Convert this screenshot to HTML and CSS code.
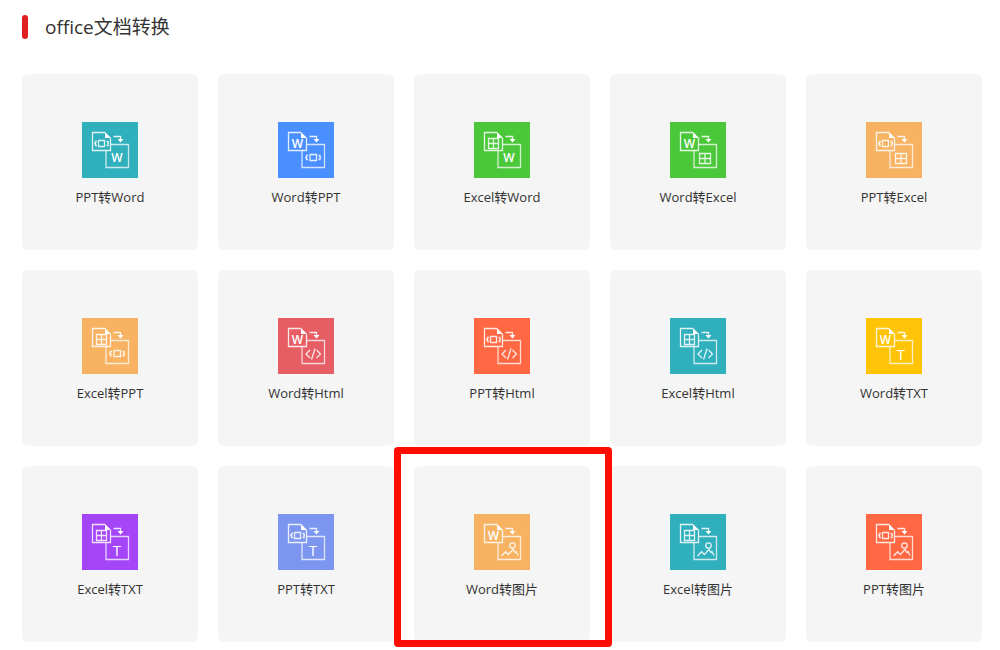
FILE: index.html
```html
<!DOCTYPE html>
<html lang="zh-CN">
<head>
  <meta charset="UTF-8">
  <meta name="viewport" content="width=device-width, initial-scale=1.0">
  <title>office文档转换</title>
  <link rel="stylesheet" href="styles.css">
</head>
<body>
  <!-- shared icon parts -->
  <svg class="sprite" aria-hidden="true">
    <symbol id="base" viewBox="0 0 56 56">
      <path d="M23 10.5H10.5V28.5H28.5V16"/>
      <path d="M29 22.5H46.5V45.5H24V29" stroke-opacity=".75"/>
      <path d="M23 10V16H29Z" fill="#fff" stroke="none"/>
      <path d="M31.5 14.500H38.5V18"/>
      <path d="M35.5 17H41.5L38.500 20.500Z" fill="#fff" stroke="none"/>
    </symbol>
    <symbol id="from-word" viewBox="0 0 56 56"><text class="letter" x="19.5" y="26">W</text></symbol>
    <symbol id="from-ppt" viewBox="0 0 56 56">
      <path d="M16.5 18.5H22.5V24.5H16.5ZM15 19.5H13.5V23.5H15M12 21.5H13.5M24.5 19.5H26V23.5H24.5M26 21.5H27"/>
    </symbol>
    <symbol id="from-excel" viewBox="0 0 56 56"><path d="M14.5 16.5H24.5V26.5H14.5ZM19.5 16.5V26.5M14.5 21.5H24.5"/></symbol>
    <symbol id="to-word" viewBox="0 0 56 56"><text class="letter" x="35" y="40">W</text></symbol>
    <symbol id="to-ppt" viewBox="0 0 56 56">
      <path d="M32 32.5H38.5V38.5H32ZM30 33.5H28.5V37.5H30M27 35.5H28.5M40.5 33.5H42V37.5H40.5M42 35.5H43"/>
    </symbol>
    <symbol id="to-excel" viewBox="0 0 56 56"><path d="M29.5 31.5H40.5V41.5H29.5ZM35 31.5V41.5M29.5 36.5H40.5"/></symbol>
    <symbol id="to-html" viewBox="0 0 56 56"><path d="M32 32L28 36L32 40M38.5 32L42.5 36L38.5 40M37 30.5L33.5 41.5"/></symbol>
    <symbol id="to-txt" viewBox="0 0 56 56"><text class="letter tall" x="35" y="42">T</text></symbol>
    <symbol id="to-image" viewBox="0 0 56 56">
      <circle cx="38.5" cy="31.5" r="2.7"/>
      <path d="M27.5 42L31.7 37.7L34.3 40.5L39 35.5L41 38.5L42 37.5L44 41.5"/>
    </symbol>
  </svg>

  <main class="page">
    <h1 class="title">office文档转换</h1>
    <div class="grid">
      <a class="card" href="#">
        <svg class="icon teal" viewBox="0 0 56 56" aria-hidden="true"><use href="#base"/><use href="#from-ppt"/><use href="#to-word"/></svg>
        <span class="label">PPT转Word</span>
      </a>
      <a class="card" href="#">
        <svg class="icon blue" viewBox="0 0 56 56" aria-hidden="true"><use href="#base"/><use href="#from-word"/><use href="#to-ppt"/></svg>
        <span class="label">Word转PPT</span>
      </a>
      <a class="card" href="#">
        <svg class="icon green" viewBox="0 0 56 56" aria-hidden="true"><use href="#base"/><use href="#from-excel"/><use href="#to-word"/></svg>
        <span class="label">Excel转Word</span>
      </a>
      <a class="card" href="#">
        <svg class="icon green" viewBox="0 0 56 56" aria-hidden="true"><use href="#base"/><use href="#from-word"/><use href="#to-excel"/></svg>
        <span class="label">Word转Excel</span>
      </a>
      <a class="card" href="#">
        <svg class="icon orange" viewBox="0 0 56 56" aria-hidden="true"><use href="#base"/><use href="#from-ppt"/><use href="#to-excel"/></svg>
        <span class="label">PPT转Excel</span>
      </a>
      <a class="card" href="#">
        <svg class="icon orange" viewBox="0 0 56 56" aria-hidden="true"><use href="#base"/><use href="#from-excel"/><use href="#to-ppt"/></svg>
        <span class="label">Excel转PPT</span>
      </a>
      <a class="card" href="#">
        <svg class="icon rose" viewBox="0 0 56 56" aria-hidden="true"><use href="#base"/><use href="#from-word"/><use href="#to-html"/></svg>
        <span class="label">Word转Html</span>
      </a>
      <a class="card" href="#">
        <svg class="icon coral" viewBox="0 0 56 56" aria-hidden="true"><use href="#base"/><use href="#from-ppt"/><use href="#to-html"/></svg>
        <span class="label">PPT转Html</span>
      </a>
      <a class="card" href="#">
        <svg class="icon teal" viewBox="0 0 56 56" aria-hidden="true"><use href="#base"/><use href="#from-excel"/><use href="#to-html"/></svg>
        <span class="label">Excel转Html</span>
      </a>
      <a class="card" href="#">
        <svg class="icon yellow" viewBox="0 0 56 56" aria-hidden="true"><use href="#base"/><use href="#from-word"/><use href="#to-txt"/></svg>
        <span class="label">Word转TXT</span>
      </a>
      <a class="card" href="#">
        <svg class="icon purple" viewBox="0 0 56 56" aria-hidden="true"><use href="#base"/><use href="#from-excel"/><use href="#to-txt"/></svg>
        <span class="label">Excel转TXT</span>
      </a>
      <a class="card" href="#">
        <svg class="icon indigo" viewBox="0 0 56 56" aria-hidden="true"><use href="#base"/><use href="#from-ppt"/><use href="#to-txt"/></svg>
        <span class="label">PPT转TXT</span>
      </a>
      <a class="card marked" href="#">
        <svg class="icon orange" viewBox="0 0 56 56" aria-hidden="true"><use href="#base"/><use href="#from-word"/><use href="#to-image"/></svg>
        <span class="label">Word转图片</span>
      </a>
      <a class="card" href="#">
        <svg class="icon teal" viewBox="0 0 56 56" aria-hidden="true"><use href="#base"/><use href="#from-excel"/><use href="#to-image"/></svg>
        <span class="label">Excel转图片</span>
      </a>
      <a class="card" href="#">
        <svg class="icon coral" viewBox="0 0 56 56" aria-hidden="true"><use href="#base"/><use href="#from-ppt"/><use href="#to-image"/></svg>
        <span class="label">PPT转图片</span>
      </a>
    </div>
  </main>
</body>
</html>
```

FILE: styles.css
```css
* {
  box-sizing: border-box;
}

body {
  margin: 0;
  background-color: #fff;
  font-family: "Open Sans", "Noto Sans CJK SC", sans-serif;
  color: #333;
}

.sprite {
  display: none;
}

.page {
  padding: 12px 18px 8px 22px;
}

.title {
  display: flex;
  align-items: center;
  gap: 17px;
  margin: 0 0 32px;
  font-size: 19px;
  font-weight: 400;
  line-height: 30px;
}

.title::before {
  content: "";
  width: 6px;
  height: 24px;
  border-radius: 3px;
  background-color: #e02020;
}

.grid {
  display: grid;
  grid-template-columns: repeat(5, 1fr);
  gap: 20px;
}

.card {
  position: relative;
  display: flex;
  flex-direction: column;
  align-items: center;
  gap: 9px;
  padding: 48px 0 43px;
  border-radius: 6px;
  background-color: #f5f5f5;
  color: #333;
  text-decoration: none;
}

.label {
  font-size: 13px;
  line-height: 20px;
}

.icon {
  width: 56px;
  height: 56px;
  fill: none;
  stroke: #fff;
  stroke-width: 1.3;
  stroke-opacity: .85;
}

.letter {
  fill: #fff;
  stroke: none;
  font-family: "Open Sans", sans-serif;
  font-size: 12px;
  font-weight: 600;
  text-anchor: middle;
}

.tall {
  font-size: 15px;
  font-weight: 400;
}

/* red frame around the chosen converter */
.marked::after {
  content: "";
  position: absolute;
  z-index: 1;
  top: -19px;
  right: -22px;
  bottom: -5px;
  left: -20px;
  border: 7px solid #ff0d00;
  border-radius: 4px;
}

.teal { background-color: #30afbc; }
.blue { background-color: #4a8fff; }
.green { background-color: #4ac83a; }
.orange { background-color: #f7b262; }
.rose { background-color: #e65d64; }
.coral { background-color: #ff6843; }
.yellow { background-color: #ffc408; }
.purple { background-color: #a445f8; }
.indigo { background-color: #7c96f0; }
```
